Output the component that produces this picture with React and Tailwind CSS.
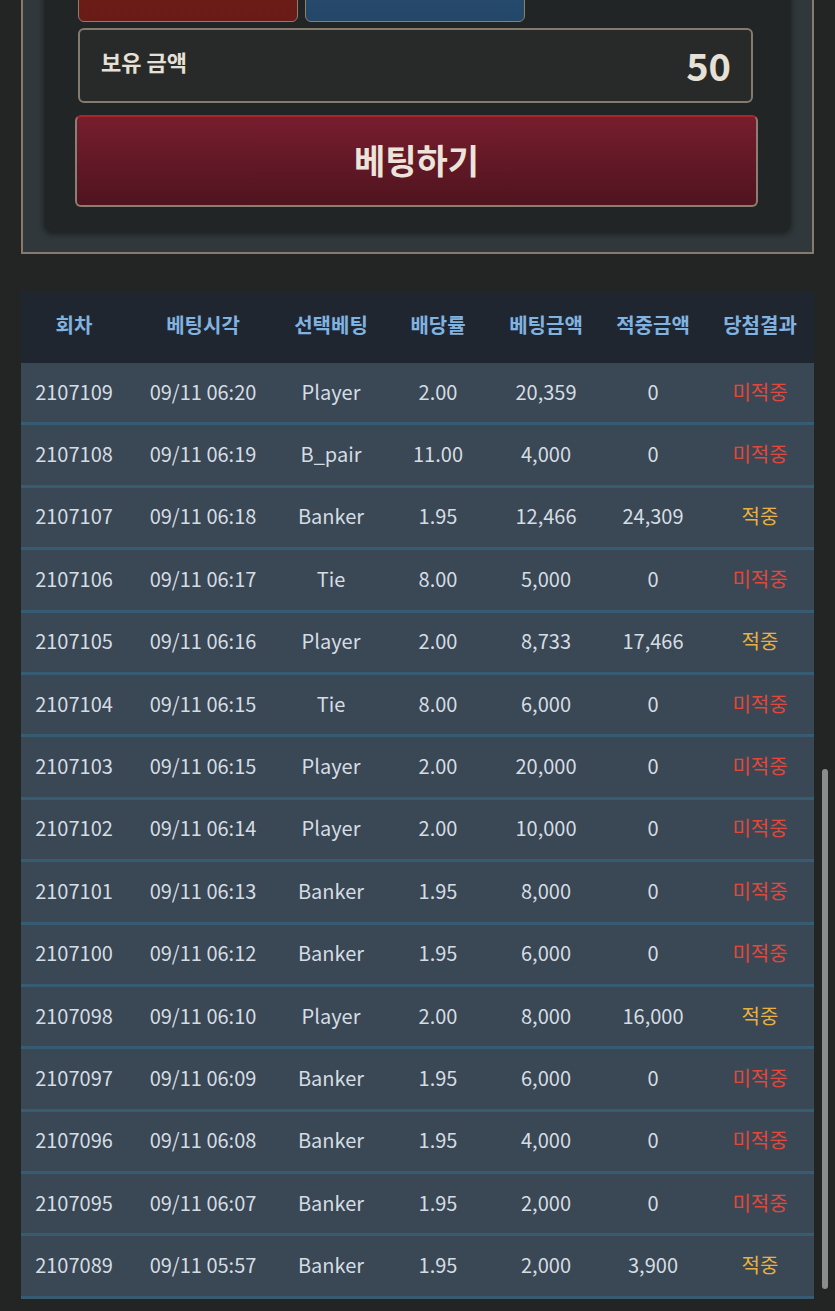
import React from 'react';

const rows = [
  ['2107109', '09/11 06:20', 'Player', '2.00', '20,359', '0', false],
  ['2107108', '09/11 06:19', 'B_pair', '11.00', '4,000', '0', false],
  ['2107107', '09/11 06:18', 'Banker', '1.95', '12,466', '24,309', true],
  ['2107106', '09/11 06:17', 'Tie', '8.00', '5,000', '0', false],
  ['2107105', '09/11 06:16', 'Player', '2.00', '8,733', '17,466', true],
  ['2107104', '09/11 06:15', 'Tie', '8.00', '6,000', '0', false],
  ['2107103', '09/11 06:15', 'Player', '2.00', '20,000', '0', false],
  ['2107102', '09/11 06:14', 'Player', '2.00', '10,000', '0', false],
  ['2107101', '09/11 06:13', 'Banker', '1.95', '8,000', '0', false],
  ['2107100', '09/11 06:12', 'Banker', '1.95', '6,000', '0', false],
  ['2107098', '09/11 06:10', 'Player', '2.00', '8,000', '16,000', true],
  ['2107097', '09/11 06:09', 'Banker', '1.95', '6,000', '0', false],
  ['2107096', '09/11 06:08', 'Banker', '1.95', '4,000', '0', false],
  ['2107095', '09/11 06:07', 'Banker', '1.95', '2,000', '0', false],
  ['2107089', '09/11 05:57', 'Banker', '1.95', '2,000', '3,900', true],
];

const headers = ['회차', '베팅시각', '선택베팅', '배당률', '베팅금액', '적중금액', '당첨결과'];
const cols = 'grid grid-cols-[106px_152px_104px_110px_106px_108px_106px]';

const App = () => {
  return (
    <div
      className="min-h-[1311px] bg-[#232524] overflow-hidden"
      style={{ fontFamily: '"Noto Sans CJK KR", "Noto Sans", sans-serif' }}
    >
      {/* bet panel */}
      <div className="mx-[21px] -mt-[60px] border-2 border-t-0 border-[#857a6b] bg-[#30383b] px-[21px] pb-[21px]">
        <div className="rounded-lg bg-[#222526] pl-[34px] pr-[38px] pb-[24px] shadow-[0_3px_6px_rgba(0,0,0,0.45)]">
          <div className="flex gap-[7px]">
            <div className="h-[82px] w-[220px] rounded-b-md border border-[#8a8070] bg-gradient-to-b from-[#7a2019] to-[#681b17]" />
            <div className="h-[82px] w-[220px] rounded-b-md border border-[#8a8070] bg-gradient-to-b from-[#2c5276] to-[#244768]" />
          </div>
          <div className="mt-[6px] flex h-[75px] items-center justify-between rounded-md border-2 border-[#857b6c] bg-[#282a29] pl-[21px] pr-[20px]">
            <span className="-mt-[9px] text-[22px] font-bold text-[#e6e0d6]">보유 금액</span>
            <span className="-mt-[3px] text-[38px] font-bold text-[#e6e0d6]">50</span>
          </div>
          <div className="-ml-[3px] -mr-[5px] mt-[12px] flex h-[92px] items-center justify-center rounded-md border-2 border-[#8a7f70] border-t-[#a8282a] bg-gradient-to-b from-[#771d2e] to-[#4f141f]">
            <span className="-mt-[4px] text-[34px] font-bold text-[#ece4da]">베팅하기</span>
          </div>
        </div>
      </div>

      {/* history table */}
      <div className="mx-[21px] mt-[37px] mb-[12px]">
        <div className={`${cols} h-[72px] items-center bg-[#202630] pb-[4px] text-center`}>
          {headers.map((h) => (
            <div key={h} className="text-[20px] font-bold text-[#80b3e0]">{h}</div>
          ))}
        </div>
        {rows.map((r) => (
          <div
            key={r[0]}
            className={`${cols} h-[62.4px] items-center border-b-[3px] border-[#375b70] bg-[#3a4754] pb-[2px] text-center text-[20px] text-[#d5dde4]`}
          >
            <div>{r[0]}</div>
            <div>{r[1]}</div>
            <div>{r[2]}</div>
            <div>{r[3]}</div>
            <div>{r[4]}</div>
            <div>{r[5]}</div>
            <div className={r[6] ? 'text-[#e8b13f]' : 'text-[#e2473a]'}>{r[6] ? '적중' : '미적중'}</div>
          </div>
        ))}
      </div>

      {/* overlay scrollbar */}
      <div className="fixed left-[822px] top-[769px] h-[520px] w-[6px] rounded-full bg-[#8c8c8c]" />
    </div>
  );
};

export default App;
